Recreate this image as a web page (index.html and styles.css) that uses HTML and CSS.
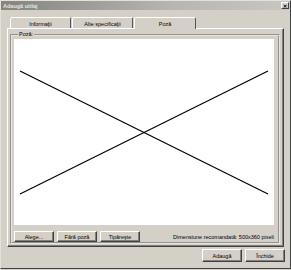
FILE: index.html
```html
<!DOCTYPE html>
<html lang="ro">
<head>
  <meta charset="UTF-8" />
  <title>Adaugă utilaj</title>
  <link rel="stylesheet" href="styles.css">
</head>
<body>
  <div class="window">
    <div class="titlebar">
      <span class="title">Adaugă utilaj</span>
      <span class="close">&#x2715;</span>
    </div>

    <div class="tabs">
      <div class="tab">Informaţii</div>
      <div class="tab">Alte specificaţii</div>
      <div class="tab active">Poză</div>
    </div>

    <div class="panel">
      <fieldset class="group">
        <legend>Poză:</legend>
        <div class="picture">
          <svg width="260" height="186" viewBox="0 0 260 186">
            <line x1="6" y1="32" x2="254" y2="155" stroke="#000" stroke-width="1.2" />
            <line x1="6" y1="155" x2="254" y2="32" stroke="#000" stroke-width="1.2" />
          </svg>
        </div>
        <div class="picture-actions">
          <button class="btn">Alege...</button>
          <button class="btn">Fără poză</button>
          <button class="btn">Tipăreşte</button>
          <span class="hint">Dimensiune recomandată: 500x360 pixeli</span>
        </div>
      </fieldset>
    </div>

    <div class="footer">
      <button class="btn btn-big">Adaugă</button>
      <button class="btn btn-big">Închide</button>
    </div>
  </div>
</body>
</html>
```

FILE: styles.css
```css
* {
  margin: 0;
  padding: 0;
  box-sizing: border-box;
}

body {
  font-family: 'Liberation Sans', Arial, sans-serif;
  font-size: 5.5px;
  color: #000;
  background: #d4d0c8;
}

.window {
  width: 291px;
  height: 269px;
  display: flex;
  flex-direction: column;
  background: #d4d0c8;
  border: 1px solid;
  border-color: #e4e1db #404040 #404040 #e4e1db;
}

.titlebar {
  height: 9px;
  display: flex;
  align-items: center;
  justify-content: space-between;
  padding: 0 1px 0 2px;
  background: linear-gradient(to right, #858380, #b8b6b1 60%, #c9c7c2);
}

.title {
  color: #e6e4df;
  font-weight: bold;
  font-size: 5.5px;
}

.close {
  width: 8px;
  height: 7px;
  display: flex;
  align-items: center;
  justify-content: center;
  font-size: 5px;
  font-weight: bold;
  background: #d4d0c8;
  border: 1px solid;
  border-color: #fff #404040 #404040 #fff;
}

.tabs {
  display: flex;
  align-items: flex-end;
  margin-top: 7px;
  padding-left: 9px;
  height: 11px;
}

.tab {
  width: 61px;
  height: 11px;
  display: flex;
  align-items: center;
  justify-content: center;
  padding-top: 1px;
  background: #d4d0c8;
  border: 1px solid;
  border-bottom: none;
  border-color: #fff #555 transparent #fff;
  border-radius: 2px 2px 0 0;
  margin-right: 1px;
}

.tab.active {
  width: 62px;
  height: 12px;
  margin-bottom: -1px;
  z-index: 1;
}

.panel {
  flex: 1;
  margin: 0 6px 0 6px;
  padding: 2px 2px 3px 2px;
  border: 1px solid;
  border-color: #fff #404040 #404040 #fff;
  box-shadow: inset -1px -1px 0 #808080;
  max-height: 219px;
}

.group {
  border: 2px groove #e8e5df;
  padding: 1px 4px 0 2px;
  margin-right: 1px;
  min-width: 0;
}

.group legend {
  margin-left: 4px;
  padding: 0 1px;
  line-height: 7px;
}

.picture {
  height: 186px;
  background: #fff;
}

.picture svg {
  display: block;
}

.picture-actions {
  display: flex;
  align-items: center;
  gap: 3px;
  margin-top: 6px;
  height: 11px;
}

.hint {
  margin-left: auto;
}

.btn {
  width: 40px;
  height: 11px;
  font-family: inherit;
  font-size: 5.5px;
  color: #000;
  background: #d4d0c8;
  border: 1px solid;
  border-color: #fff #404040 #404040 #fff;
  box-shadow: inset -1px -1px 0 #808080;
}

.footer {
  display: flex;
  justify-content: flex-end;
  gap: 3px;
  margin-top: 2px;
  padding-right: 5px;
  height: 18px;
}

.btn-big {
  height: 13px;
}
```
